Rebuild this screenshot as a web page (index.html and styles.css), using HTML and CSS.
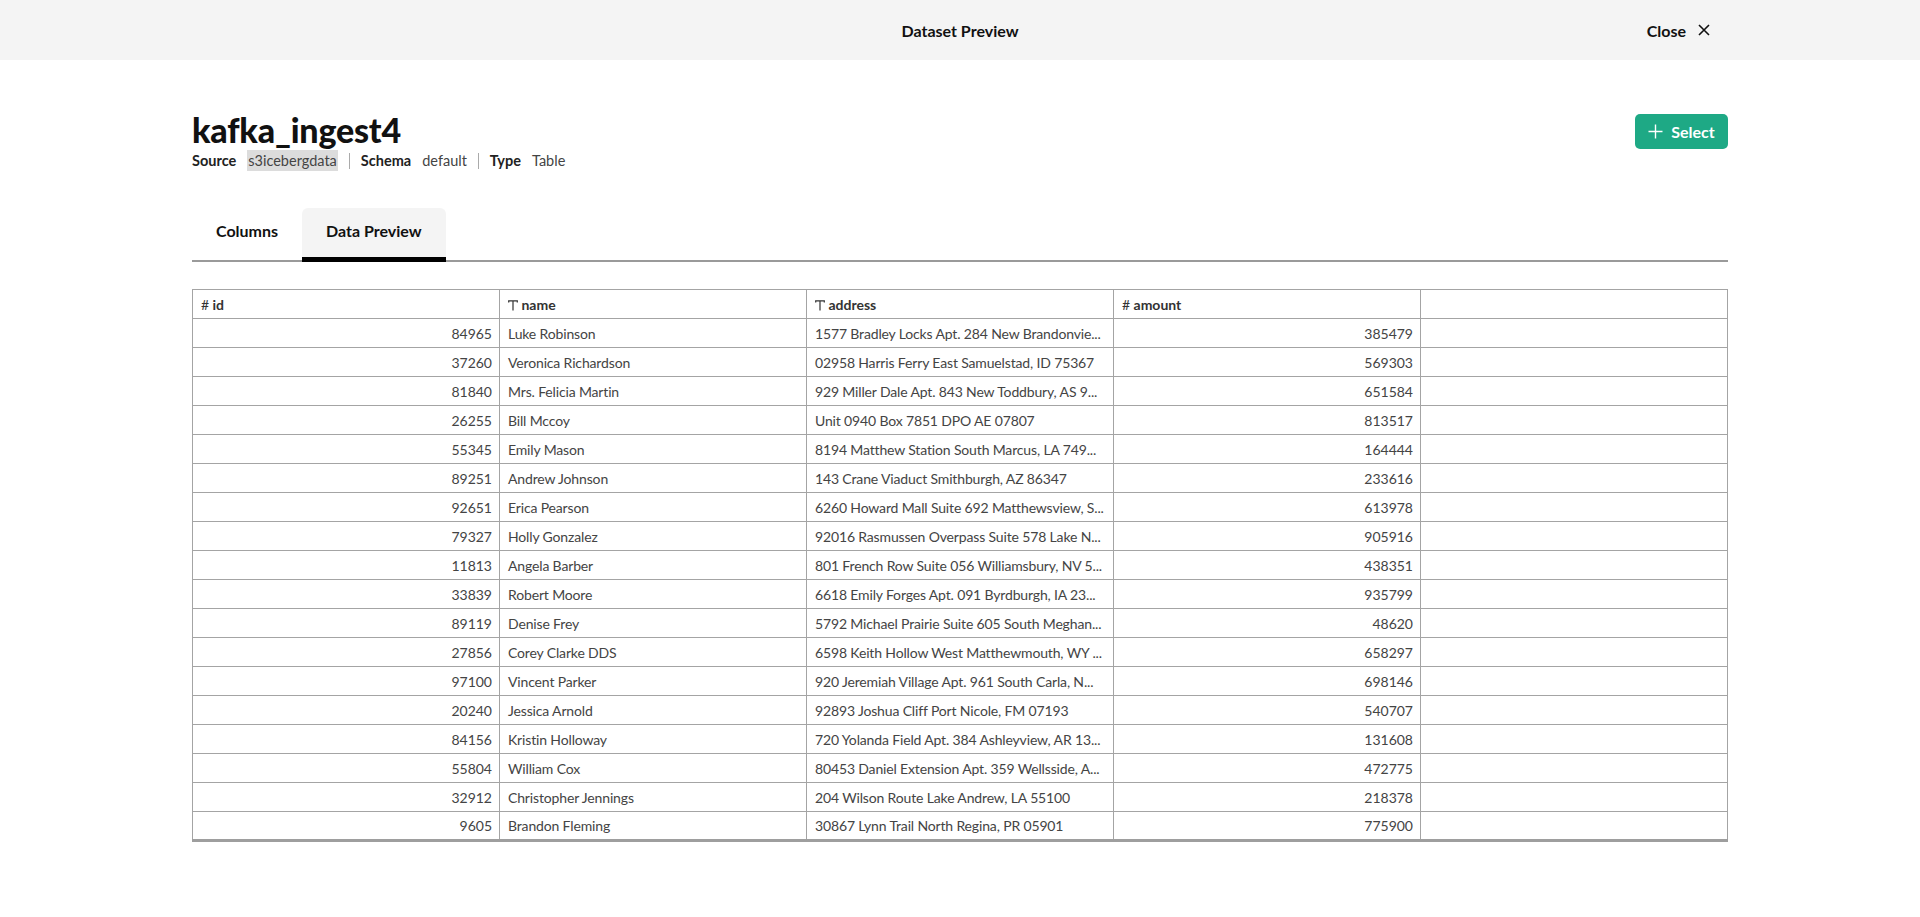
FILE: index.html
```html
<!DOCTYPE html>
<html lang="en">
<head>
<meta charset="utf-8">
<title>Dataset Preview</title>
<link rel="stylesheet" href="styles.css">
</head>
<body>
<header class="topbar">
  <div></div>
  <div class="topbar-title">Dataset Preview</div>
  <button class="close-btn">Close
    <svg width="12" height="12" viewBox="0 0 12 12"><path d="M1 1 L11 11 M11 1 L1 11" stroke="#111" stroke-width="1.6" fill="none"/></svg>
  </button>
</header>
<main class="content">
  <div class="title-row">
    <div>
      <h1 class="ds-title">kafka_ingest4</h1>
      <div class="meta">
        <span class="meta-label">Source</span><span class="meta-value hl">s3icebergdata</span>
        <span class="sep"></span>
        <span class="meta-label">Schema</span><span class="meta-value">default</span>
        <span class="sep"></span>
        <span class="meta-label">Type</span><span class="meta-value">Table</span>
      </div>
    </div>
    <button class="select-btn">
      <svg width="15" height="15" viewBox="0 0 15 15"><path d="M7.5 0.5 V14.5 M0.5 7.5 H14.5" stroke="#fff" stroke-width="1.4" fill="none"/></svg>
      Select
    </button>
  </div>
  <nav class="tabs">
    <div class="tab">Columns</div>
    <div class="tab active">Data Preview</div>
  </nav>
  <table class="grid">
    <colgroup><col><col><col><col><col></colgroup>
    <thead>
      <tr>
        <th><span class="ico">#</span> id</th>
        <th><svg class="tico" width="10" height="11" viewBox="0 0 10 11"><path d="M0.7 2.6 V0.8 H9.3 V2.6 M5 0.8 V10.5" stroke="#333" stroke-width="1.2" fill="none"/></svg> name</th>
        <th><svg class="tico" width="10" height="11" viewBox="0 0 10 11"><path d="M0.7 2.6 V0.8 H9.3 V2.6 M5 0.8 V10.5" stroke="#333" stroke-width="1.2" fill="none"/></svg> address</th>
        <th><span class="ico">#</span> amount</th>
        <th></th>
      </tr>
    </thead>
    <tbody>
      <tr><td class="num">84965</td><td>Luke Robinson</td><td>1577 Bradley Locks Apt. 284 New Brandonvie...</td><td class="num">385479</td><td></td></tr>
      <tr><td class="num">37260</td><td>Veronica Richardson</td><td>02958 Harris Ferry East Samuelstad, ID 75367</td><td class="num">569303</td><td></td></tr>
      <tr><td class="num">81840</td><td>Mrs. Felicia Martin</td><td>929 Miller Dale Apt. 843 New Toddbury, AS 9...</td><td class="num">651584</td><td></td></tr>
      <tr><td class="num">26255</td><td>Bill Mccoy</td><td>Unit 0940 Box 7851 DPO AE 07807</td><td class="num">813517</td><td></td></tr>
      <tr><td class="num">55345</td><td>Emily Mason</td><td>8194 Matthew Station South Marcus, LA 749...</td><td class="num">164444</td><td></td></tr>
      <tr><td class="num">89251</td><td>Andrew Johnson</td><td>143 Crane Viaduct Smithburgh, AZ 86347</td><td class="num">233616</td><td></td></tr>
      <tr><td class="num">92651</td><td>Erica Pearson</td><td>6260 Howard Mall Suite 692 Matthewsview, S...</td><td class="num">613978</td><td></td></tr>
      <tr><td class="num">79327</td><td>Holly Gonzalez</td><td>92016 Rasmussen Overpass Suite 578 Lake N...</td><td class="num">905916</td><td></td></tr>
      <tr><td class="num">11813</td><td>Angela Barber</td><td>801 French Row Suite 056 Williamsbury, NV 5...</td><td class="num">438351</td><td></td></tr>
      <tr><td class="num">33839</td><td>Robert Moore</td><td>6618 Emily Forges Apt. 091 Byrdburgh, IA 23...</td><td class="num">935799</td><td></td></tr>
      <tr><td class="num">89119</td><td>Denise Frey</td><td>5792 Michael Prairie Suite 605 South Meghan...</td><td class="num">48620</td><td></td></tr>
      <tr><td class="num">27856</td><td>Corey Clarke DDS</td><td>6598 Keith Hollow West Matthewmouth, WY ...</td><td class="num">658297</td><td></td></tr>
      <tr><td class="num">97100</td><td>Vincent Parker</td><td>920 Jeremiah Village Apt. 961 South Carla, N...</td><td class="num">698146</td><td></td></tr>
      <tr><td class="num">20240</td><td>Jessica Arnold</td><td>92893 Joshua Cliff Port Nicole, FM 07193</td><td class="num">540707</td><td></td></tr>
      <tr><td class="num">84156</td><td>Kristin Holloway</td><td>720 Yolanda Field Apt. 384 Ashleyview, AR 13...</td><td class="num">131608</td><td></td></tr>
      <tr><td class="num">55804</td><td>William Cox</td><td>80453 Daniel Extension Apt. 359 Wellsside, A...</td><td class="num">472775</td><td></td></tr>
      <tr><td class="num">32912</td><td>Christopher Jennings</td><td>204 Wilson Route Lake Andrew, LA 55100</td><td class="num">218378</td><td></td></tr>
      <tr><td class="num">9605</td><td>Brandon Fleming</td><td>30867 Lynn Trail North Regina, PR 05901</td><td class="num">775900</td><td></td></tr>
    </tbody>
  </table>
</main>
</body>
</html>
```

FILE: styles.css
```css
* { box-sizing: border-box; }
html, body { margin: 0; padding: 0; background: #fff; }
body {
  font-family: Lato, "Noto Sans", "Liberation Sans", sans-serif;
  color: #111;
}
.topbar {
  height: 60px;
  background: #f4f4f4;
  display: grid;
  grid-template-columns: 1fr auto 1fr;
  align-items: center;
}
.topbar-title {
  font-weight: 700;
  font-size: 16px;
  color: #111;
}
.close-btn {
  justify-self: end;
  margin-right: 210px;
  background: none;
  border: 0;
  font-family: inherit;
  font-weight: 700;
  font-size: 16px;
  color: #111;
  display: flex;
  align-items: center;
  gap: 12px;
  padding: 0;
}
.content {
  width: 1536px;
  margin: 0 auto;
  padding-top: 50px;
}
.title-row {
  display: flex;
  justify-content: space-between;
  align-items: flex-start;
}
.ds-title {
  margin: 0;
  font-size: 34px;
  font-weight: 900;
  line-height: 40px;
  letter-spacing: -0.2px;
}
.meta {
  display: flex;
  align-items: center;
  font-size: 14.5px;
  margin-top: 0;
  color: #333;
}
.meta-label { font-weight: 700; color: #222; margin-right: 11px; }
.meta-value { color: #444; }
.meta-value.hl { background: #dcdcdc; padding: 2px 1px; }
.sep {
  width: 1px;
  height: 16px;
  background: #aaa;
  margin: 0 11px;
}
.select-btn {
  margin-top: 4px;
  width: 93px;
  height: 35px;
  background: #1ea985;
  border: 0;
  border-radius: 5px;
  color: #fff;
  font-family: inherit;
  font-weight: 700;
  font-size: 16px;
  display: flex;
  align-items: center;
  justify-content: center;
  gap: 8px;
  padding: 0;
}
.tabs {
  display: flex;
  margin-top: 37px;
  border-bottom: 2px solid #9a9a9a;
  height: 54px;
}
.tab {
  padding: 0 24px 10px;
  font-weight: 700;
  font-size: 16px;
  display: flex;
  align-items: center;
  height: 54px;
  color: #111;
  border-radius: 6px 6px 0 0;
}
.tab.active {
  background: #f4f4f4;
  border-bottom: 5px solid #000;
  padding-bottom: 5px;
}
.grid {
  margin-top: 27px;
  width: 1536px;
  border-collapse: collapse;
  table-layout: fixed;
  font-size: 14px;
  border-bottom: 3px solid #9e9e9e;
}
.grid th, .grid td {
  border: 1px solid #a4a4a4;
  height: 29px;
  padding: 0 3px 0 8px;
  white-space: nowrap;
  overflow: hidden;
  text-overflow: ellipsis;
}
.grid th {
  text-align: left;
  font-weight: 700;
  color: #333;
}
.grid td { color: #444; letter-spacing: -0.15px; }
.grid td.num { text-align: right; padding-right: 7px; letter-spacing: 0; }
.ico { font-weight: 400; }
.tico { vertical-align: -1px; }
.grid tbody tr:last-child td { border-bottom: 3px solid #9e9e9e; }
```
